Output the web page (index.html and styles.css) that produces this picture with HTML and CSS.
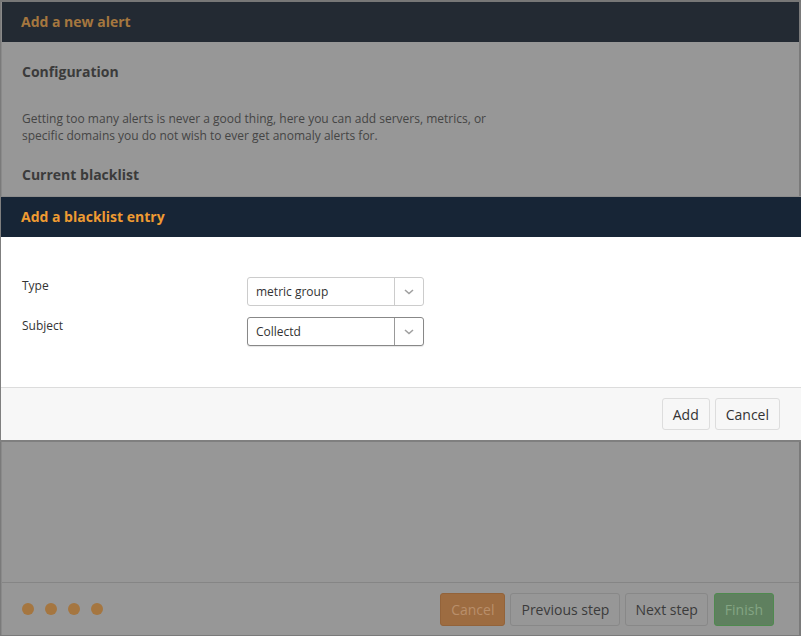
FILE: index.html
```html
<!DOCTYPE html>
<html>
<head>
<meta charset="utf-8">
<link rel="stylesheet" href="styles.css">
</head>
<body>
<div class="page-behind"></div>
<div class="wizard">
  <div class="wizard-header">Add a new alert</div>
  <div class="wizard-body">
    <h3 class="section-title">Configuration</h3>
    <p class="section-text">Getting too many alerts is never a good thing, here you can add servers, metrics, or specific domains you do not wish to ever get anomaly alerts for.</p>
    <h3 class="section-title">Current blacklist</h3>
  </div>
  <div class="wizard-footer">
    <div class="steps">
      <span class="dot"></span><span class="dot"></span><span class="dot"></span><span class="dot"></span>
    </div>
    <div class="wizard-actions">
      <button class="wbtn wbtn-cancel">Cancel</button>
      <button class="wbtn">Previous step</button>
      <button class="wbtn wbtn-next">Next step</button>
      <button class="wbtn wbtn-finish">Finish</button>
    </div>
  </div>
</div>

<div class="dialog">
  <div class="dialog-header">Add a blacklist entry</div>
  <div class="dialog-body">
    <div class="form-row">
      <label class="form-label">Type</label>
      <div class="select">
        <span class="select-value">metric group</span>
        <span class="select-arrow"><svg width="10" height="6" viewBox="0 0 10 6"><path d="M1 1l4 3.5L9 1" fill="none" stroke="#a0a0a0" stroke-width="1.6"/></svg></span>
      </div>
    </div>
    <div class="form-row">
      <label class="form-label">Subject</label>
      <div class="select select-focus">
        <span class="select-value">Collectd</span>
        <span class="select-arrow"><svg width="10" height="6" viewBox="0 0 10 6"><path d="M1 1l4 3.5L9 1" fill="none" stroke="#a0a0a0" stroke-width="1.6"/></svg></span>
      </div>
    </div>
  </div>
  <div class="dialog-footer">
    <button class="btn">Add</button>
    <button class="btn">Cancel</button>
  </div>
</div>
</body>
</html>
```

FILE: styles.css
```css
* { box-sizing: border-box; }

html, body {
  margin: 0;
  padding: 0;
}

body {
  width: 801px;
  height: 636px;
  background: #7a7a7a;
  font-family: "Open Sans", "Noto Sans", sans-serif;
  position: relative;
  overflow: hidden;
}

.page-behind {
  height: 2px;
  background: #777;
}

.wizard {
  margin: 0 2px 0 1px;
  height: 633px;
  background: #979797;
  display: flex;
  flex-direction: column;
  border-left: 1px solid #8a8a8a;
}

.wizard-header {
  height: 40px;
  flex: none;
  background: #232a33;
  color: #a5773f;
  font-weight: 700;
  font-size: 14px;
  line-height: 40px;
  padding-left: 19px;
}

.wizard-body {
  flex: 1;
  padding: 20px 20px 0 20px;
}

.section-title {
  margin: 0;
  font-size: 14px;
  line-height: 20px;
  font-weight: 700;
  color: #3b3b3b;
}

.section-text {
  margin: 28px 0 21px 0;
  width: 480px;
  font-size: 12px;
  line-height: 17px;
  color: #454545;
}

.wizard-footer {
  flex: none;
  height: 53px;
  border-top: 1px solid #858585;
  display: flex;
  align-items: center;
  justify-content: space-between;
  padding: 0 25px 0 20px;
}

.steps {
  display: flex;
  gap: 11px;
}

.dot {
  width: 12px;
  height: 12px;
  border-radius: 50%;
  background: #a57640;
}

.wizard-actions {
  display: flex;
  gap: 5px;
}

.wbtn {
  font-family: inherit;
  font-size: 14px;
  height: 33px;
  padding: 0 10px;
  border: 1px solid #888;
  border-radius: 3px;
  background: #979797;
  color: #3b3b3b;
}

.wbtn-next {
  padding: 0 9px;
}

.wbtn-cancel {
  background: #9d6c41;
  border-color: #93633a;
  color: #b98f6b;
}

.wbtn-finish {
  margin-left: 1px;
  background: #5f805f;
  border-color: #4f8a4f;
  color: #84a584;
}

.dialog {
  position: absolute;
  top: 196px;
  left: 1px;
  width: 800px;
  background: #fff;
  border-top: 1px solid #8c8c8c;
  box-shadow: 0 1px 0 1px #7f7f7f;
}

.dialog-header {
  height: 40px;
  background: #172536;
  color: #ef9b32;
  font-weight: 700;
  font-size: 14px;
  line-height: 40px;
  padding-left: 20px;
}

.dialog-body {
  padding: 40px 0 41px 21px;
  display: flex;
  flex-direction: column;
  gap: 11px;
}

.form-row {
  display: flex;
  align-items: flex-start;
}

.form-label {
  width: 225px;
  font-size: 12px;
  line-height: 17px;
  color: #333;
  margin-top: 0;
}

.select {
  width: 177px;
  height: 29px;
  border: 1px solid #ccc;
  border-radius: 3px;
  display: flex;
  align-items: center;
  background: #fff;
}

.select-focus {
  border-color: #888;
  box-shadow: 0 1px 1px rgba(0,0,0,0.1);
}

.select-value {
  flex: 1;
  padding-left: 8px;
  font-size: 12px;
  color: #333;
}

.select-arrow {
  width: 29px;
  height: 100%;
  border-left: 1px solid #ccc;
  display: flex;
  align-items: center;
  justify-content: center;
}

.select-focus .select-arrow {
  border-left-color: #999;
}

.dialog-footer {
  height: 53px;
  background: #f7f7f7;
  border-top: 1px solid #dcdcdc;
  display: flex;
  justify-content: flex-end;
  align-items: center;
  gap: 5px;
  padding: 0 21px 0 0;
}

.btn {
  font-family: inherit;
  font-size: 14px;
  height: 32px;
  padding: 0 10px;
  border: 1px solid #ddd;
  border-radius: 3px;
  background: #f7f7f7;
  color: #333;
}
```
